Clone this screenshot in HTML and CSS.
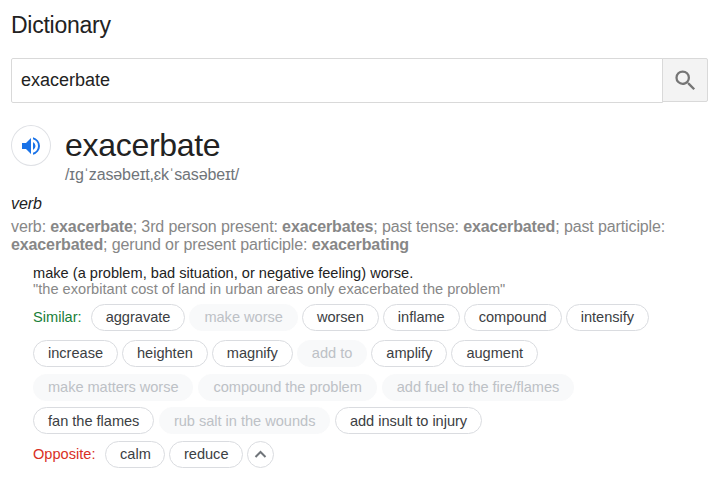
FILE: index.html
```html
<!DOCTYPE html>
<html lang="en">
<head>
<meta charset="utf-8">
<title>Dictionary</title>
<link rel="stylesheet" href="styles.css">
</head>
<body>
<main class="dictionary">
  <h1 class="heading">Dictionary</h1>
  <form class="search">
    <input class="search-input" type="text" value="exacerbate" aria-label="Word">
    <button class="search-button" type="button" aria-label="Search">
      <svg width="27" height="27" viewBox="0 0 24 24"><path fill="#757575" d="M15.5 14h-.79l-.28-.27A6.47 6.47 0 0 0 16 9.5 6.5 6.5 0 1 0 9.5 16c1.61 0 3.09-.59 4.23-1.57l.27.28v.79l5 4.99L20.49 19l-4.99-5zm-6 0a4.5 4.5 0 1 1 0-9 4.5 4.5 0 0 1 0 9z"/></svg>
    </button>
  </form>
  <header class="entry">
    <button class="audio" type="button" aria-label="Listen">
      <svg width="24" height="24" viewBox="0 0 24 24"><path fill="#1a73e8" d="M3 9v6h4l5 5V4L7 9H3zm13.500 3A4.500 4.500 0 0 0 14 7.970v8.050A4.470 4.470 0 0 0 16.500 12zM14 3.230v2.060a7 7 0 0 1 0 13.420v2.060a9 9 0 0 0 0-17.540z"/></svg>
    </button>
    <div>
      <h2 class="word">exacerbate</h2>
      <div class="phonetic">/ɪɡˈzasəbeɪt,ɛkˈsasəbeɪt/</div>
    </div>
  </header>
  <div class="part">verb</div>
  <p class="forms">verb: <b>exacerbate</b>; 3rd person present: <b>exacerbates</b>; past tense: <b>exacerbated</b>; past participle:<br><b>exacerbated</b>; gerund or present participle: <b>exacerbating</b></p>
  <section class="sense">
    <div class="definition">make (a problem, bad situation, or negative feeling) worse.</div>
    <div class="example">"the exorbitant cost of land in urban areas only exacerbated the problem"</div>
    <div class="row row-first"><span class="label similar">Similar:</span><span class="pill">aggravate</span><span class="pill muted">make worse</span><span class="pill">worsen</span><span class="pill">inflame</span><span class="pill">compound</span><span class="pill">intensify</span></div>
    <div class="row"><span class="pill">increase</span><span class="pill">heighten</span><span class="pill">magnify</span><span class="pill muted">add to</span><span class="pill">amplify</span><span class="pill">augment</span></div>
    <div class="row row-phrases"><span class="pill muted">make matters worse</span><span class="pill muted">compound the problem</span><span class="pill muted">add fuel to the fire/flames</span></div>
    <div class="row row-idioms"><span class="pill">fan the flames</span><span class="pill muted">rub salt in the wounds</span><span class="pill">add insult to injury</span></div>
    <div class="row row-opposite"><span class="label opposite">Opposite:</span><span class="pill">calm</span><span class="pill">reduce</span><button class="collapse" type="button" aria-label="Show less"><svg width="13" height="9" viewBox="0 0 13 9"><path fill="none" stroke="#70757a" stroke-width="2" d="M1.500 7l5-5 5 5"/></svg></button></div>
  </section>
</main>
</body>
</html>
```
FILE: styles.css
```css
* { box-sizing: border-box; }
body { margin: 0; background: #fff; color: #222; font-family: "Liberation Sans", Arial, sans-serif; }
.dictionary { width: 717px; height: 480px; padding: 11px 9px 0 11px; overflow: hidden; white-space: nowrap; }
.heading { margin: 0; font-size: 23px; font-weight: 400; line-height: 28px; letter-spacing: -0.25px; }
.search { display: flex; align-items: flex-start; margin: 19px 0 0; }
.search-input { width: 652px; height: 45px; padding: 0 9px 1px; border: 1px solid #d9d9d9; border-radius: 2px 0 0 2px; color: #222; font: 18px "Liberation Sans", Arial, sans-serif; outline: 0; }
.search-button { display: flex; align-items: center; justify-content: center; width: 46px; height: 44px; margin-left: -1px; padding: 0; border: 1px solid #d9d9d9; border-radius: 0 2px 2px 0; background: #f3f3f3; }
.entry { display: flex; gap: 14px; margin-top: 22px; }
.audio { display: flex; align-items: center; justify-content: center; width: 40px; height: 41px; padding: 0; border: 1px solid #dfe1e5; border-radius: 50%; background: #fff; }
.word { margin: 2px 0 0; font-size: 32px; font-weight: 400; line-height: 36px; letter-spacing: -0.3px; }
.phonetic { margin-top: 2px; color: #70757a; font-size: 16px; line-height: 20px; letter-spacing: -0.13px; }
.part { margin-top: 10px; font-size: 16px; font-style: italic; line-height: 18px; letter-spacing: -0.1px; }
.forms { margin: 5px 0 0; color: #878787; font-size: 16px; line-height: 18px; letter-spacing: -0.122px; }
.sense { margin-left: 22px; font-size: 14.6px; }
.definition { margin-top: 11px; line-height: 16px; letter-spacing: 0.01px; }
.example { color: #878787; line-height: 16px; letter-spacing: 0.015px; }
.row { display: flex; gap: 4px; height: 27px; margin-bottom: 7px; }
.row-first { margin-top: 7px; margin-bottom: 9px; }
.row-phrases { gap: 5px; margin-bottom: 6px; }
.row-idioms { gap: 4.5px; }
.row-idioms .pill { line-height: 27px; }
.row-opposite .pill { padding: 0 13.6px; }
.label { margin-right: 5px; line-height: 26px; }
.similar { color: #188038; }
.opposite { margin-right: 6px; color: #d93025; }
.pill { height: 27px; padding: 0 14px; border: 1px solid #dadce0; border-radius: 14px; color: #3c4043; line-height: 25px; letter-spacing: -0.02px; }
.row-phrases .pill { letter-spacing: -0.05px; }
.muted { border-color: #f8f9fa; background: #f8f9fa; color: #bdc1c6; }
.collapse { display: flex; align-items: center; justify-content: center; width: 27px; height: 27px; padding: 0; border: 1px solid #dadce0; border-radius: 50%; background: #fff; }
```
